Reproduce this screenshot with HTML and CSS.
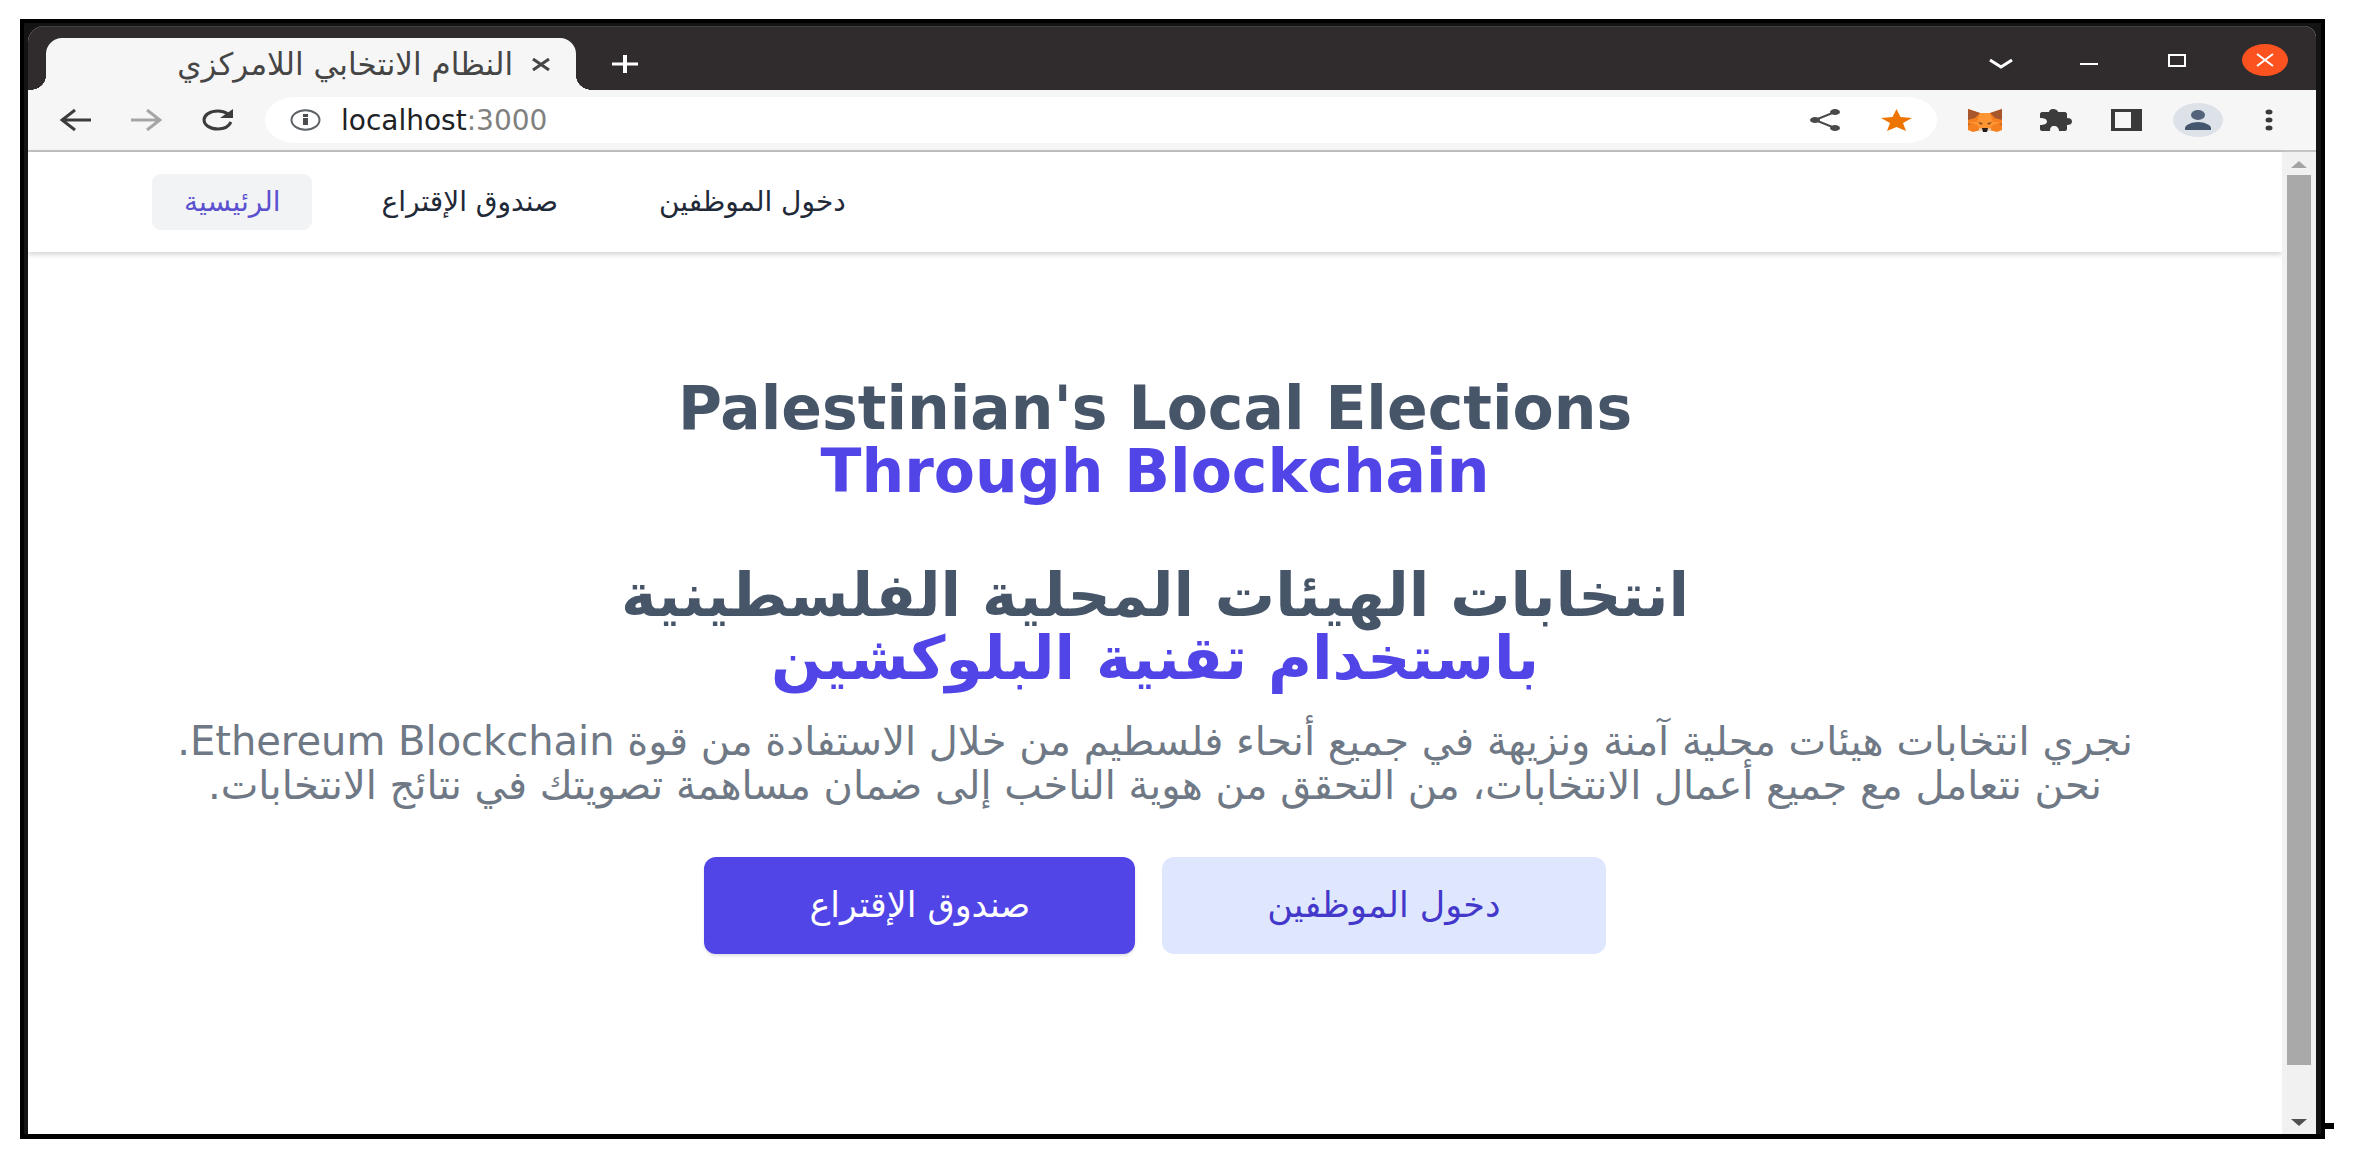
FILE: index.html
```html
<!DOCTYPE html>
<html lang="ar">
<head>
    <meta charset="utf-8">
    <title>النظام الانتخابي اللامركزي</title>
    <link rel="stylesheet" href="styles.css">
</head>
<body>
    <div class="frame">
        <div class="window">
            <!-- title bar -->
            <div class="titlebar">
                <div class="tab">
                    <span class="tab-title" dir="rtl">النظام الانتخابي اللامركزي</span>
                    <button class="tab-close" aria-label="Close tab">
                        <svg width="18" height="13" viewBox="0 0 18 13"><path d="M1 1l16 11M17 1L1 12" stroke="#454545" stroke-width="3"/></svg>
                    </button>
                </div>
                <button class="tab-new" aria-label="New tab">
                    <svg width="26" height="18" viewBox="0 0 26 18"><path d="M0 9h26" stroke="#fff" stroke-width="3"/><path d="M13 0v18" stroke="#fff" stroke-width="4"/></svg>
                </button>
                <div class="controls">
                    <button aria-label="Tab list">
                        <svg width="26" height="18" viewBox="0 0 26 18"><path d="M2 9l11 7 11-7" fill="none" stroke="#fff" stroke-width="3"/></svg>
                    </button>
                    <button aria-label="Minimize">
                        <svg width="18" height="10" viewBox="0 0 18 10"><path d="M0 9h18" stroke="#fff" stroke-width="2"/></svg>
                    </button>
                    <button aria-label="Maximize">
                        <svg width="18" height="13" viewBox="0 0 18 13"><rect x="1" y="1" width="16" height="11" fill="none" stroke="#fff" stroke-width="2"/></svg>
                    </button>
                    <button aria-label="Close">
                        <svg width="46" height="32" viewBox="0 0 46 32"><ellipse cx="23" cy="16" rx="23" ry="16" fill="#fc521f"/><path d="M15 10l16 12M31 10L15 22" stroke="#fff" stroke-width="2"/></svg>
                    </button>
                </div>
            </div>

            <!-- toolbar -->
            <div class="toolbar">
                <button aria-label="Back">
                    <svg width="31" height="22" viewBox="0 0 31 22"><path d="M31 11H3M15 1L2 11l13 10" fill="none" stroke="#3c3c3c" stroke-width="3"/></svg>
                </button>
                <button aria-label="Forward">
                    <svg width="31" height="22" viewBox="0 0 31 22"><path d="M0 11h28M16 1l13 10-13 10" fill="none" stroke="#a5a5a5" stroke-width="3"/></svg>
                </button>
                <button aria-label="Reload">
                    <svg width="32" height="22" viewBox="0 0 32 22"><path d="M26 5C23 3 20 2 16 2 8 2 2 6 2 11s6 9 14 9c6 0 11-3 13-7" fill="none" stroke="#3c3c3c" stroke-width="3"/><path d="M31 0v9H18z" fill="#3c3c3c"/></svg>
                </button>
                <div class="omnibox">
                    <button aria-label="Site information">
                        <svg width="31" height="22" viewBox="0 0 31 22"><ellipse cx="15.500" cy="11" rx="14" ry="9.800" fill="none" stroke="#5f6368" stroke-width="2"/><path d="M13 9h5v7h-5zM13 5h5v3h-5z" fill="#4a4d50"/></svg>
                    </button>
                    <div class="url">localhost<span>:3000</span></div>
                    <button aria-label="Share">
                        <svg width="31" height="22" viewBox="0 0 31 22"><path d="M25 3L5 11l20 8" fill="none" stroke="#4a4a4a" stroke-width="2"/><g fill="#4a4a4a"><ellipse cx="5" cy="11" rx="5" ry="3"/><ellipse cx="25" cy="3" rx="5" ry="3"/><ellipse cx="25" cy="19" rx="5" ry="3"/></g></svg>
                    </button>
                    <button aria-label="Bookmark">
                        <svg width="31" height="22" viewBox="0 0 31 22"><path d="M15.500 0l4 8 11.500 1-9 5 3 8-9.500-4-9.500 4 3-8-9-5 11.500-1z" fill="#ee7400"/></svg>
                    </button>
                </div>
                <button aria-label="MetaMask">
                    <svg width="36" height="23" viewBox="0 0 36 23">
                        <path d="M1 0l12 4h10l12-4v21l-5 2-8-2-2 1h-4l-2-1-8 2-5-2z" fill="#f5801f"/>
                        <path d="M1 0l12 4-5 5-7 2zM35 0L23 4l5 5 7 2z" fill="#a8562c"/>
                        <path d="M13 4h10l3 9h8l-8 3-4 5h-8l-4-5-8-3h8z" fill="#ff9432"/>
                        <path d="M11 13l5 1-2 2zM25 13l-5 1 2 2z" fill="#8a4a1c"/>
                        <path d="M1 14l3 1-3 2zM35 14l-3 1 3 2z" fill="#c96a26"/>
                        <path d="M12 19l4 1v2l-4-1zM24 19l-4 1v2l4-1z" fill="#e9cdb8"/>
                        <path d="M15 19h6l-1 4h-4z" fill="#251d19"/>
                    </svg>
                </button>
                <button aria-label="Extensions">
                    <svg width="32" height="22" viewBox="0 0 32 22"><path d="M2 3h7c0-2 2-3 4-3s5 1 5 3h7c1 0 2 1 2 2v4c3 0 5 1 5 3.500S30 16 27 16v4c0 1-1 2-2 2h-6c0-3-2-5-5-5s-4 2-4 5H2c-1 0-2-1-2-2v-4c4 0 7-1 7-3.500S4 9 0 9V5c0-1 1-2 2-2z" fill="#3c3c3c"/></svg>
                </button>
                <button aria-label="Side panel">
                    <svg width="31" height="22" viewBox="0 0 31 22"><path d="M0 0h31v22H0zM4 3v16h16V3z" fill="#3a3a3a" fill-rule="evenodd"/></svg>
                </button>
                <button aria-label="Profile">
                    <svg width="50" height="34" viewBox="0 0 50 34"><ellipse cx="25" cy="17" rx="25" ry="17" fill="#dde2e8"/><ellipse cx="25" cy="12" rx="7" ry="5" fill="#52637a"/><path d="M12 27v-2c0-3 7-6 13-6s13 3 13 6v2z" fill="#43566e"/></svg>
                </button>
                <button aria-label="Menu">
                    <svg width="8" height="22" viewBox="0 0 8 22" fill="#3a3a3a"><ellipse cx="4" cy="3" rx="3.500" ry="2.500"/><ellipse cx="4" cy="11" rx="3.500" ry="2.500"/><ellipse cx="4" cy="19" rx="3.500" ry="2.500"/></svg>
                </button>
            </div>

            <div class="viewport">
                <div class="page">
                    <nav class="nav">
                        <a class="active" href="#" dir="rtl">الرئيسية</a>
                        <a href="#" dir="rtl">صندوق الإقتراع</a>
                        <a href="#" dir="rtl">دخول الموظفين</a>
                    </nav>
                    <main class="hero">
                        <h1>Palestinian's Local Elections<br><span>Through Blockchain</span></h1>
                        <h2 dir="rtl">انتخابات الهيئات المحلية الفلسطينية<br><span>باستخدام تقنية البلوكشين</span></h2>
                        <p dir="rtl">نجري انتخابات هيئات محلية آمنة ونزيهة في جميع أنحاء فلسطيم من خلال الاستفادة من قوة Ethereum Blockchain.<br>نحن نتعامل مع جميع أعمال الانتخابات، من التحقق من هوية الناخب إلى ضمان مساهمة تصويتك في نتائج الانتخابات.</p>
                        <div class="actions">
                            <a class="btn btn-primary" href="#" dir="rtl">صندوق الإقتراع</a>
                            <a class="btn btn-light" href="#" dir="rtl">دخول الموظفين</a>
                        </div>
                    </main>
                </div>
                <div class="scrollbar">
                    <svg width="16" height="7" viewBox="0 0 16 7"><path d="M0 7l8-7 8 7z" fill="#a3a3a3"/></svg>
                    <div class="track"><div class="thumb"></div></div>
                    <svg width="16" height="7" viewBox="0 0 16 7"><path d="M0 0l8 7 8-7z" fill="#505050"/></svg>
                </div>
            </div>
        </div>
    </div>
</body>
</html>
```
FILE: styles.css
```css
* {
    box-sizing: border-box;
}

body {
    margin: 0;
    padding: 19px 34px 19px 20px;
    min-height: 100vh;
    display: flex;
    background: #fff;
    font-family: "DejaVu Sans", sans-serif;
}

button {
    border: 0;
    padding: 0;
    background: none;
    display: flex;
    align-items: center;
    justify-content: center;
}

a {
    text-decoration: none;
}

.frame {
    position: relative;
    flex: 1;
    display: flex;
    border: 4px solid #000;
    border-bottom-width: 5px;
    padding: 3px 5px 0 4px;
    background: #141414;
}

/* small tick on the outside of the frame */
.frame::after {
    content: "";
    position: absolute;
    right: -13px;
    bottom: 5px;
    width: 9px;
    height: 6px;
    background: #000;
}

.window {
    flex: 1;
    min-width: 0;
    display: flex;
    flex-direction: column;
    border-radius: 16px 12px 0 0;
    overflow: hidden;
    background: #fff;
}

/* title bar */
.titlebar {
    display: flex;
    height: 64px;
    padding: 11px 7px 0 18px;
    background: #302c2d;
    border-top: 1px solid #454142;
}

.tab {
    position: relative;
    display: flex;
    align-items: center;
    justify-content: flex-end;
    gap: 19px;
    width: 530px;
    padding-right: 26px;
    background: #f6f6f6;
    border-radius: 16px 16px 0 0;
    color: #454545;
    font-size: 31px;
    line-height: 48px;
    white-space: nowrap;
}

.tab::before,
.tab::after {
    content: "";
    position: absolute;
    bottom: 0;
    width: 16px;
    height: 14px;
}

.tab::before {
    right: 100%;
    background: radial-gradient(ellipse 16px 14px at 0 0, #302c2d 98%, #f6f6f6 100%);
}

.tab::after {
    left: 100%;
    background: radial-gradient(ellipse 16px 14px at 100% 0, #302c2d 98%, #f6f6f6 100%);
}

.tab-new {
    width: 98px;
}

.controls {
    display: flex;
    margin-left: auto;
    padding-bottom: 8px;
}

.controls button {
    width: 88px;
}

/* toolbar */
.toolbar {
    display: flex;
    height: 62px;
    padding: 7px 12px;
    background: #f6f6f6;
    border-bottom: 2px solid #c4c4c4;
}

.toolbar button {
    flex: none;
    width: 71px;
}

.omnibox {
    flex: 1;
    display: flex;
    align-items: center;
    margin: 0 12px;
    padding: 0 5px;
    border-radius: 32px / 24px;
    background: #fff;
}

.url {
    flex: 1;
    color: #202124;
    font-size: 28px;
}

.url span {
    color: #80807e;
}

/* page */
.viewport {
    flex: 1;
    display: flex;
}

.page {
    flex: 1;
    min-width: 0;
}

.nav {
    display: flex;
    gap: 37px;
    padding: 22px 124px;
    box-shadow: 0 2px 6px rgba(0, 0, 0, 0.2);
}

.nav a {
    padding: 0 32px;
    border-radius: 9px;
    color: #1f2937;
    font-size: 28px;
    line-height: 56px;
}

.nav .active {
    background: #f2f3f5;
    color: #5b50cf;
}

.hero {
    padding: 125px 48px 0;
    text-align: center;
}

h1,
h2 {
    margin: 0 0 61px;
    color: #475569;
    font-size: 60px;
    font-weight: bold;
    line-height: 63px;
}

h2 {
    margin-bottom: 29px;
}

h1 span,
h2 span {
    color: #5145e8;
}

.hero p {
    margin: 0;
    color: #6f7885;
    font-size: 40px;
    line-height: 44px;
}

.actions {
    display: flex;
    justify-content: center;
    gap: 27px;
    margin-top: 50px;
}

.btn {
    padding: 0 105px;
    border-radius: 12px;
    font-size: 35px;
    line-height: 97px;
}

.btn-primary {
    background: #5145e8;
    color: #fff;
    box-shadow: 0 2px 3px rgba(0, 0, 0, 0.12);
}

.btn-light {
    background: #dfe7ff;
    color: #4338ca;
}

.scrollbar {
    display: flex;
    flex-direction: column;
    align-items: center;
    width: 34px;
    padding: 9px 5px 8px;
    background: #f1f1f1;
}

.scrollbar svg {
    flex: none;
}

.track {
    flex: 1;
    align-self: stretch;
    margin: 7px 0;
}

.thumb {
    height: 95%;
    background: #a9a9a9;
}
```
